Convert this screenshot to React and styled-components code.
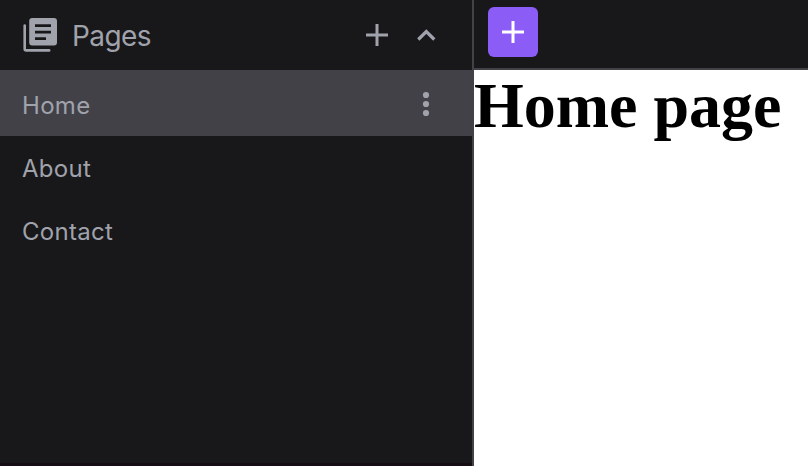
import React from "react";
import styled, { createGlobalStyle } from "styled-components";

const GlobalStyle = createGlobalStyle`
  *, *::before, *::after { box-sizing: border-box; }
  body { margin: 0; background: #fff; }
`;

const Shell = styled.div`
  display: flex;
  width: 808px;
  height: 466px;
  overflow: hidden;
  font-family: Inter, "Liberation Sans", sans-serif;
`;

const Sidebar = styled.aside`
  display: flex;
  flex-direction: column;
  width: 474px;
  flex: none;
  background: #18181a;
  border-right: 2px solid #434246;
`;

const SidebarHeader = styled.header`
  display: flex;
  align-items: center;
  height: 70px;
  padding: 0 36px 0 23px;
  color: #a0a2ac;
`;

const SidebarTitle = styled.h2`
  flex: 1;
  margin: 0 0 0 15px;
  padding-top: 1px;
  font-size: 28px;
  font-weight: 400;
  line-height: 40px;
  letter-spacing: -0.6px;
`;

const HeaderActions = styled.div`
  display: flex;
  align-items: center;
  gap: 28px;
`;

const IconButton = styled.button`
  display: flex;
  padding: 0;
  border: 0;
  background: none;
  color: inherit;
`;

const PageList = styled.ul`
  flex: 1;
  margin: 0;
  padding: 0;
  list-style: none;
  border-bottom: 3px solid #160c14;
`;

const PageRow = styled.li`
  display: flex;
  align-items: center;
  justify-content: space-between;
  height: ${({ $active }) => ($active ? 66 : 63)}px;
  padding: ${({ $active }) => ($active ? "5px 40px 0 22px" : "2px 40px 0 22px")};
  background: ${({ $active }) => ($active ? "#424148" : "transparent")};
  color: #a0a2ac;
  font-size: 24px;
  line-height: 36px;
  letter-spacing: 0.3px;
`;

const RowAction = styled(IconButton)`
  margin-bottom: 3px;
`;

const Main = styled.main`
  flex: 1;
  min-width: 0;
  background: #fff;
`;

const Toolbar = styled.div`
  height: 70px;
  padding: 7px 14px;
  background: #18181a;
  border-bottom: 2px solid #434246;
`;

const AddButton = styled.button`
  display: flex;
  align-items: center;
  justify-content: center;
  width: 50px;
  height: 50px;
  padding: 0;
  border: 0;
  border-radius: 6px;
  background: #8b5cf6;
  color: #fff;
`;

const PageHeading = styled.h1`
  margin: 0;
  font: 700 64px/72px "Liberation Serif", serif;
  color: #000;
  white-space: nowrap;
`;

const PagesIcon = () => (
  <svg width="34" height="34" viewBox="0 0 34 34" fill="currentColor">
    <path
      fillRule="evenodd"
      d="M9.2 0H31Q34 0 34 3V24.4Q34 27.4 31 27.4H9.2Q6.2 27.4 6.2 24.4V3Q6.2 0 9.2 0ZM12 6.3V9H28V6.3ZM12 12.8V15.5H28V12.8ZM12 19.2V21.9H23V19.2Z"
    />
    <path d="M1.7 6.3Q3 6.3 3 7.6V31H26.2Q27.5 31 27.5 32.4T26.2 33.8H3.2Q.4 33.8 .4 31V7.6Q.4 6.3 1.7 6.3Z" />
  </svg>
);

const PlusIcon = () => (
  <svg width="22" height="22" viewBox="0 0 22 22" fill="none" stroke="currentColor" strokeWidth="3">
    <path d="M11 0V22M0 11H22" />
  </svg>
);

const ChevronUpIcon = () => (
  <svg width="20" height="12" viewBox="0 0 20 12" fill="none" stroke="currentColor" strokeWidth="3.2">
    <path d="M2.3 10.5L10.3 2.5L18.3 10.5" />
  </svg>
);

const MoreIcon = () => (
  <svg width="12" height="26" viewBox="0 0 12 26" fill="currentColor">
    <circle cx="6" cy="4" r="3.1" />
    <circle cx="6" cy="13" r="3.1" />
    <circle cx="6" cy="22" r="3.1" />
  </svg>
);

const pages = ["Home", "About", "Contact"];

export default function App() {
  return (
    <>
      <GlobalStyle />
      <Shell>
        <Sidebar>
          <SidebarHeader>
            <PagesIcon />
            <SidebarTitle>Pages</SidebarTitle>
            <HeaderActions>
              <IconButton aria-label="Add page"><PlusIcon /></IconButton>
              <IconButton aria-label="Collapse pages"><ChevronUpIcon /></IconButton>
            </HeaderActions>
          </SidebarHeader>
          <PageList>
            {pages.map((page, index) => (
              <PageRow key={page} $active={index === 0}>
                {page}
                {index === 0 && (
                  <RowAction aria-label="Page options"><MoreIcon /></RowAction>
                )}
              </PageRow>
            ))}
          </PageList>
        </Sidebar>
        <Main>
          <Toolbar>
            <AddButton aria-label="Add element"><PlusIcon /></AddButton>
          </Toolbar>
          <PageHeading>Home page</PageHeading>
        </Main>
      </Shell>
    </>
  );
}
